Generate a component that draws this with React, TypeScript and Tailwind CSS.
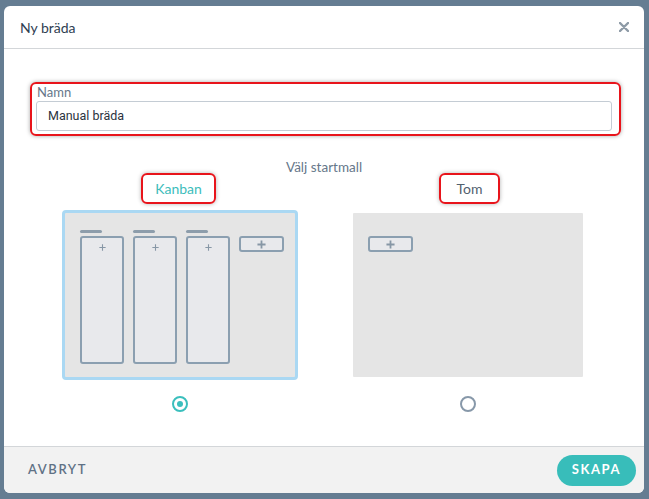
import React from "react";

const Plus = ({ size = 7, w = 1.2 }: { size?: number; w?: number }) => (
  <svg width={size} height={size} viewBox="0 0 10 10" className="block">
    <path d="M5 0.5V9.5M0.5 5H9.5" stroke="#8797a6" strokeWidth={w * 10 / size} />
  </svg>
);

const Column = () => (
  <div className="flex flex-col items-start">
    <div className="h-[3px] w-[22px] rounded-full bg-[#8d9dab]" />
    <div className="mt-[3px] flex h-[128px] w-[44px] justify-center rounded-[3px] border-2 border-[#8b9fb0] bg-[#e8e9ec] pt-[6px]">
      <Plus size={7} w={1.1} />
    </div>
  </div>
);

const AddBtn = () => (
  <div className="flex h-[16px] w-[45px] items-center justify-center rounded-[3px] border-2 border-[#8b9fb0] bg-[#e8e9ec]">
    <Plus size={9} w={1.8} />
  </div>
);

export default function App() {
  return (
    <div
      className="flex h-[499px] w-[649px] bg-[#657d92] pb-[6px] pl-[4px] pr-[5px] pt-[6px]"
      style={{ fontFamily: "Lato, 'Open Sans', sans-serif" }}
    >
      <div className="flex h-[487px] w-[640px] flex-col overflow-hidden rounded-[6px] bg-white">
        {/* header */}
        <div className="flex h-[43px] shrink-0 items-center justify-between border-b border-[#d3d6d9] pl-[16px] pr-[15px]">
          <span className="text-[14px] text-[#2e4052]">Ny bräda</span>
          <svg width="10" height="10" viewBox="0 0 10 10">
            <path d="M1 1L9 9M9 1L1 9" stroke="#8d9aa6" strokeWidth="2.4" strokeLinecap="round" />
          </svg>
        </div>

        {/* body */}
        <div className="flex flex-1 flex-col pt-[33px]">
          <div className="ml-[26px] mr-[23px] rounded-[6px] border-2 border-[#e8141b] pb-[3px] pl-[4px] pr-[7px] shadow-[0_0_4px_rgba(0,0,0,0.35)]">
            <div className="h-[16px] pl-[1px] text-[13px] leading-[16px] text-[#66778a]">Namn</div>
            <div
              className="mt-[1px] flex h-[30px] items-center rounded-[3px] border border-[#c4ccd4] pl-[11px] text-[12.5px] text-[#2b3340]"
              style={{ fontFamily: "Roboto, Arial, sans-serif" }}
            >
              Manual bräda
            </div>
          </div>

          <div className="mt-[24px] h-[14px] text-center text-[13.5px] leading-[14px] text-[#66778a]">
            Välj startmall
          </div>

          <div className="mx-[32px] -mt-px grid grid-cols-2">
            {/* Kanban */}
            <div className="flex flex-col items-center">
              <div className="mr-[3px] flex h-[31px] w-[75px] items-center justify-center rounded-[6px] border-2 border-[#e8141b] text-[14px] text-[#3dbdbb] shadow-[0_0_4px_rgba(0,0,0,0.3)]">
                Kanban
              </div>
              <div className="mt-[6px] flex h-[170px] w-[236px] gap-[9px] rounded-[4px] border-[3px] border-[#aad8f3] bg-[#e5e5e5] pl-[15px] pt-[17px]">
                <Column />
                <Column />
                <Column />
                <div className="pt-[6px]">
                  <AddBtn />
                </div>
              </div>
              <div className="mt-[16px] flex h-[16px] w-[16px] items-center justify-center rounded-full border-2 border-[#3bbfbd]">
                <div className="h-[6px] w-[6px] rounded-full bg-[#3bbfbd]" />
              </div>
            </div>

            {/* Tom */}
            <div className="flex flex-col items-center">
              <div className="ml-[3px] flex h-[31px] w-[61px] items-center justify-center rounded-[6px] border-2 border-[#e8141b] text-[14px] text-[#52606e] shadow-[0_0_4px_rgba(0,0,0,0.3)]">
                Tom
              </div>
              <div className="mt-[6px] h-[170px] w-[236px] rounded-[4px] border-[3px] border-white bg-[#e5e5e5] pl-[15px] pt-[23px]">
                <AddBtn />
              </div>
              <div className="mt-[16px] h-[16px] w-[16px] rounded-full border-2 border-[#8798a9]" />
            </div>
          </div>
        </div>

        {/* footer */}
        <div className="flex h-[47px] shrink-0 items-center justify-between border-t border-[#d3d6d9] bg-[#f2f2f2] pl-[24px] pr-[8px]">
          <span className="text-[13px] font-semibold tracking-[1.6px] text-[#5f7185]">AVBRYT</span>
          <div className="flex h-[31px] w-[79px] items-center justify-center rounded-full bg-[#38bdba] text-[13px] font-bold tracking-[1.6px] text-white">
            SKAPA
          </div>
        </div>
      </div>
    </div>
  );
}
